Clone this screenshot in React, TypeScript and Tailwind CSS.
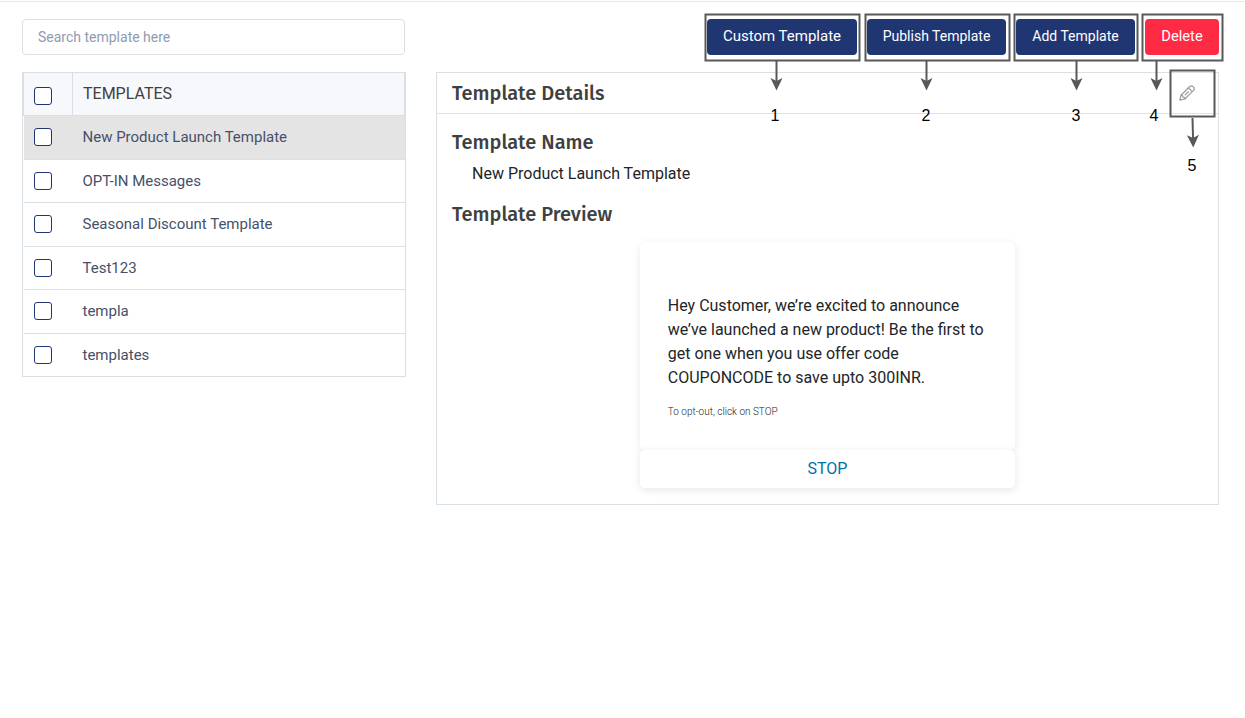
import type { ReactNode } from "react";

const templates = [
  { name: "New Product Launch Template", row: "h-[44px] bg-[#e4e4e4]" },
  { name: "OPT-IN Messages", row: "h-[43px]" },
  { name: "Seasonal Discount Template", row: "h-[44px]" },
  { name: "Test123", row: "h-[43px]" },
  { name: "templa", row: "h-[44px]" },
  { name: "templates", row: "h-[42px]" },
];

function Checkbox({ label }: { label: string }) {
  return (
    <button
      type="button"
      role="checkbox"
      aria-checked="false"
      aria-label={label}
      className="mb-px h-[18px] w-[18px] shrink-0 rounded-[3px] border border-[#1f3673] bg-white"
    />
  );
}

function ActionButton({ className, children }: { className: string; children: ReactNode }) {
  return (
    <button type="button" className={`h-9 shrink-0 rounded-[4px] text-center text-white ${className}`}>
      {children}
    </button>
  );
}

function Heading({ className, children }: { className?: string; children: ReactNode }) {
  return (
    <h3 className={`font-['Fira_Sans','Noto_Sans',sans-serif] text-[20px] font-medium leading-6 text-[#404040] ${className ?? ""}`}>
      {children}
    </h3>
  );
}

function Pencil() {
  return (
    <svg className="h-4 w-4" viewBox="0 0 16 16" fill="none" stroke="#a0a0a0" strokeWidth="1.3" strokeLinejoin="round" strokeLinecap="round">
      <path d="M0.8 15.2 2.2 10 10.7 1.5Q12.2 0.2 13.8 1.5L14.7 2.4Q15.9 4 14.6 5.4L6.1 13.8Z" />
      <path d="M2.2 10Q3.6 9.9 4 11.9Q6 12.2 6.1 13.8M9.6 3 13 6.4M6.2 9.9 9.4 6.7" />
    </svg>
  );
}

const frames = [
  { x: 705.5, y: 14.5, w: 154, h: 46 },
  { x: 865.5, y: 14.5, w: 144, h: 46 },
  { x: 1014.5, y: 14.5, w: 123, h: 46 },
  { x: 1142.5, y: 14.5, w: 80, h: 46 },
  { x: 1170.5, y: 70.5, w: 44, h: 46 },
];

const arrows = [
  { x: 776.5, y: 61, angle: 0 },
  { x: 926.5, y: 61, angle: 0 },
  { x: 1076.5, y: 61, angle: 0 },
  { x: 1156.5, y: 61, angle: 0 },
  { x: 1192.5, y: 118, angle: -1.5 },
];

function Annotations() {
  return (
    <div className="pointer-events-none absolute inset-0 font-['Liberation_Sans',sans-serif] text-[16px] leading-4 text-black">
      <svg className="absolute inset-0" width="1245" height="718" fill="none" stroke="#585858" strokeWidth="2">
        {frames.map((f) => (
          <rect key={f.x} x={f.x} y={f.y} width={f.w} height={f.h} />
        ))}
        {arrows.map((a) => (
          <g key={a.x} transform={`translate(${a.x} ${a.y}) rotate(${a.angle})`}>
            <path d="M0 0V20" />
            <path d="M0 29.5-6 17 0 20 6 17Z" fill="#585858" stroke="none" />
          </g>
        ))}
      </svg>
      <span className="absolute left-[770.5px] top-[108px]">1</span>
      <span className="absolute left-[921.5px] top-[108px]">2</span>
      <span className="absolute left-[1071.5px] top-[108px]">3</span>
      <span className="absolute left-[1149.5px] top-[108px]">4</span>
      <span className="absolute left-[1187.5px] top-[158px]">5</span>
    </div>
  );
}

export default function App() {
  return (
    <div className="relative h-[718px] w-[1245px] overflow-hidden bg-white font-[Roboto,sans-serif]">
      <div className="h-[2px] rounded-tr border-b border-[#e5e7e9]" />
      <div className="flex pl-[22px] pt-[17px]">
        <aside className="w-[384px]">
          <input
            type="text"
            placeholder="Search template here"
            className="block h-9 w-[383px] rounded-[4px] border border-[#d9e1e7] px-[15px] text-[14px] outline-none placeholder:text-[#8f9bb0]"
          />
          <div className="mt-[17px] border border-[#dadfe3]">
            <div className="flex h-[43px] border-x border-b border-[#dadfe3] bg-[#f7f8fc]">
              <div className="flex w-[49px] items-center border-r border-[#dadfe3] pl-[10px] pt-[5px]">
                <Checkbox label="Select all" />
              </div>
              <div className="pl-[10px] pt-[9px] text-[16px] leading-6 text-[#404040]">TEMPLATES</div>
            </div>
            {templates.map((t) => (
              <div
                key={t.name}
                className={`ml-px flex items-center border-b border-[#d9e0e6] pl-[10px] text-[15px] text-[#475069] last:border-b-0 ${t.row}`}
              >
                <Checkbox label={t.name} />
                <span className="pl-[30.5px]">{t.name}</span>
              </div>
            ))}
          </div>
        </aside>
        <main className="ml-[30px] w-[783px]">
          <div className="flex pl-[271px]">
            <ActionButton className="w-[150px] bg-[#1f3673] pb-[2px] text-[15px]">Custom Template</ActionButton>
            <ActionButton className="ml-[10px] w-[139px] bg-[#1f3673] pb-[2px] text-[14px]">Publish Template</ActionButton>
            <ActionButton className="ml-[10px] w-[119px] bg-[#1f3673] pb-[2px] text-[14px]">Add Template</ActionButton>
            <ActionButton className="ml-[10px] w-[74px] bg-[#ff2a43] pb-[2px] text-[14.7px]">Delete</ActionButton>
          </div>
          <section className="mt-[17px] h-[433px] border border-[#d9e0e6]">
            <header className="flex h-[41px] items-center justify-between border-b border-[#dfe3e6] pl-[15px] pr-[23px]">
              <Heading>Template Details</Heading>
              <Pencil />
            </header>
            <Heading className="mt-4 pl-[15px]">Template Name</Heading>
            <p className="mt-2 pl-[35px] text-[16px] leading-6 text-[#212529]">New Product Launch Template</p>
            <Heading className="mt-4 pl-[15px]">Template Preview</Heading>
            <div className="ml-[203px] mt-4 w-[375px]">
              <div className="h-[208px] rounded-[5px] bg-white pl-[27.8px] pt-[52px] shadow-[0_2px_8px_rgba(0,0,0,0.09)]">
                <p className="w-[322px] text-[16px] leading-6 text-[#212529]">
                  Hey Customer, we’re excited to announce we’ve launched a new product! Be the first to get one when you use offer code COUPONCODE to save upto 300INR.
                </p>
                <p className="mt-[16px] text-[10px] font-light leading-3 text-[#212529]">To opt-out, click on STOP</p>
              </div>
              <button
                type="button"
                className="block h-[38px] w-full rounded-[5px] bg-white pb-px text-center text-[16px] text-[#0070a8] shadow-[0_2px_8px_rgba(0,0,0,0.1)]"
              >
                STOP
              </button>
            </div>
          </section>
        </main>
      </div>
      <Annotations />
    </div>
  );
}
